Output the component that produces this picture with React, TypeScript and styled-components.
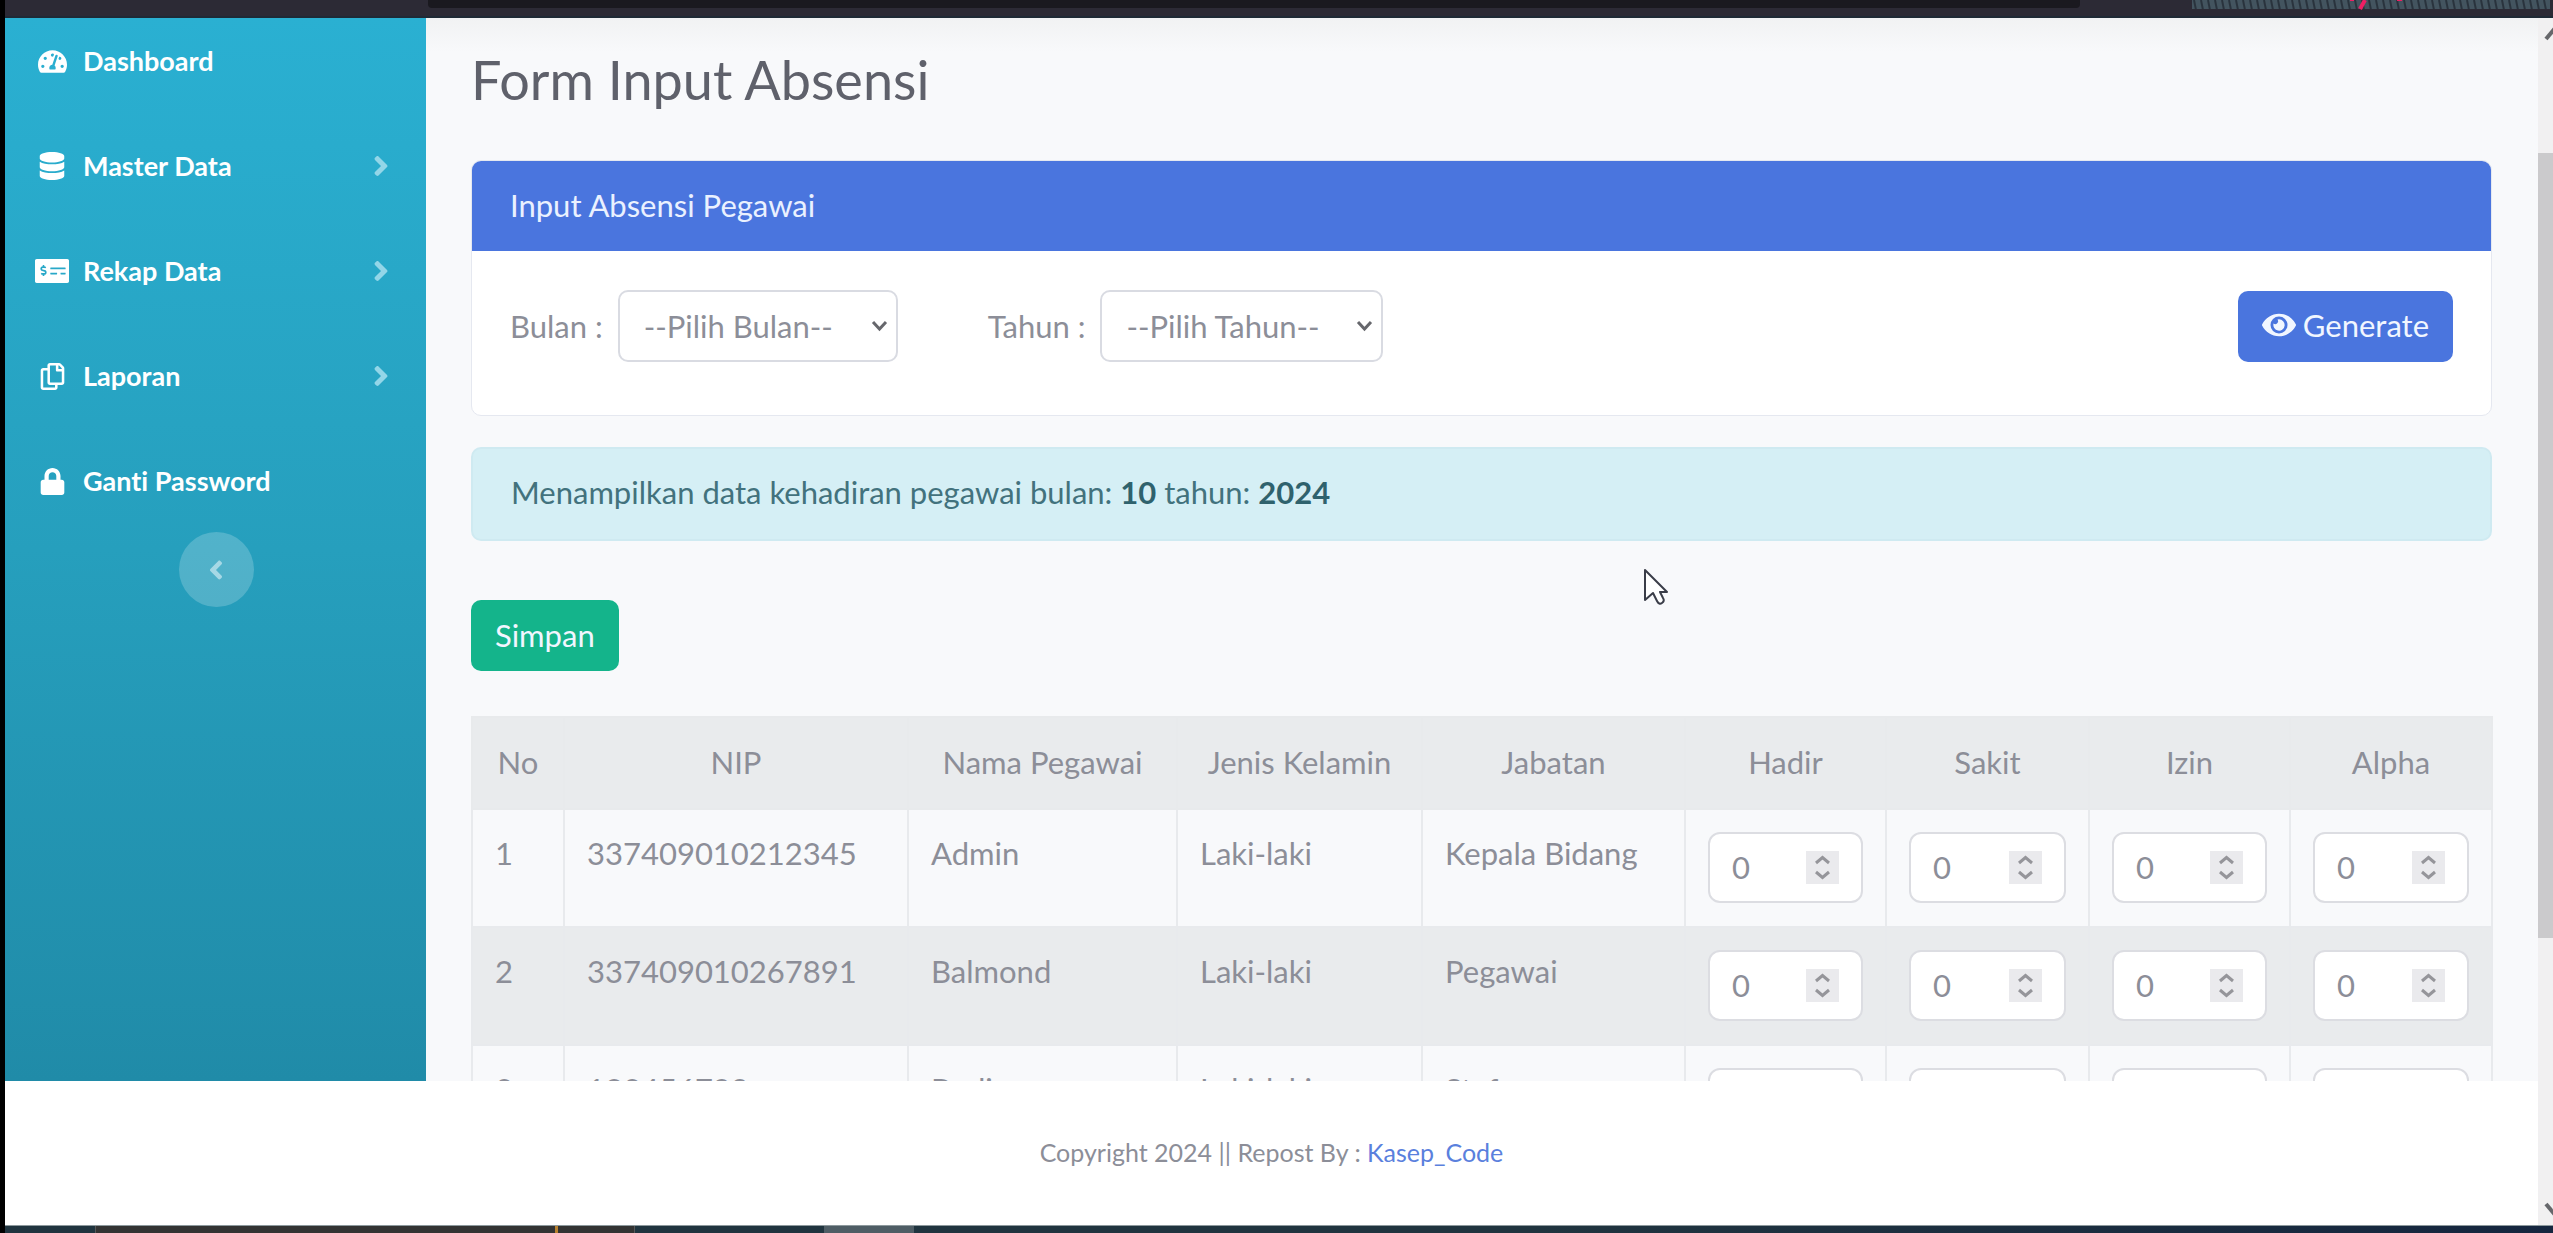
import React from "react";
import styled, { createGlobalStyle } from "styled-components";
import {
  FaTachometerAlt,
  FaDatabase,
  FaMoneyCheckAlt,
  FaRegCopy,
  FaLock,
  FaAngleRight,
  FaAngleLeft,
  FaEye,
} from "react-icons/fa";

const GlobalStyle = createGlobalStyle`
  *, *::before, *::after { box-sizing: border-box; }
  html, body, #root { height: 100%; }
  body {
    margin: 0;
    overflow: hidden;
    background: #fff;
    color: #8c8e98;
    font-family: Lato, "Open Sans", sans-serif;
    font-size: 31px;
    line-height: 46px;
    font-variant-ligatures: none;
  }
  button, input, select { font: inherit; color: inherit; }
  a { text-decoration: none; }
`;

const Screen = styled.div`
  display: flex;
  flex-direction: column;
  height: 100vh;
  border-left: 5px solid #000;
`;

const BrowserBar = styled.div`
  display: flex;
  justify-content: space-between;
  flex: none;
  height: 18px;
  padding-left: 423px;
  background: #2c2a35;
  border-bottom: 2px solid #1f2a36;
`;

const AddressBar = styled.div`
  flex: 0 1 1652px;
  height: 8px;
  border-radius: 0 0 4px 4px;
  background: #1a191f;
`;

const Stripes = styled.svg`
  display: block;
  width: 361px;
  height: 10px;
`;

const Viewport = styled.div`
  display: flex;
  flex: 1;
  min-height: 0;
`;

const Page = styled.div`
  display: flex;
  flex-direction: column;
  flex: 1;
  min-width: 0;
`;

const Body = styled.div`
  display: flex;
  flex: 1;
  min-height: 0;
`;

const Sidebar = styled.nav`
  display: flex;
  flex-direction: column;
  flex: none;
  width: 421px;
  padding: 0 29px 0 30px;
  background: linear-gradient(180deg, #2ab0d2 0%, #269fbd 50%, #208ba8 100%);
`;

const Menu = styled.div`
  display: flex;
  flex-direction: column;
  gap: 19px;
`;

const NavLink = styled.a`
  display: flex;
  align-items: center;
  gap: 14px;
  height: 86px;
  color: #fff;
  font-size: 27px;
  font-weight: 700;
`;

const NavIcon = styled.span`
  display: flex;
  justify-content: center;
  width: 34px;
`;

const NavText = styled.span`
  flex: 1;
`;

const Caret = styled.span`
  display: flex;
  color: #93d6e8;
  font-size: 32px;
`;

const Toggle = styled.button`
  display: flex;
  align-items: center;
  justify-content: center;
  width: 75px;
  height: 75px;
  margin: 8px auto 0;
  padding: 0;
  border: 0;
  border-radius: 50%;
  background: rgba(255, 255, 255, 0.2);
  color: #a6d8e5;
  font-size: 30px;
`;

const Main = styled.main`
  flex: 1;
  min-width: 0;
  overflow: hidden;
  padding: 30px 46px 0 45px;
  background: linear-gradient(180deg, #f1f2f3 0, #f8f9fb 34px);
`;

const Title = styled.h1`
  margin: 0 0 48px;
  color: #5f616b;
  font-size: 54px;
  font-weight: 400;
  line-height: 64px;
`;

const Card = styled.section`
  margin-bottom: 31px;
  border: 1px solid #e5e8f0;
  border-radius: 10px;
  background: #fff;
  overflow: hidden;
`;

const CardHeader = styled.h2`
  margin: 0;
  padding: 21px 38px 23px;
  background: #4a75de;
  color: #eaf1ff;
  font-size: 31px;
  font-weight: 400;
  line-height: 46px;
`;

const FilterForm = styled.form`
  display: flex;
  align-items: center;
  padding: 39px 38px 53px;
`;

const Field = styled.div`
  display: flex;
  align-items: center;
  gap: 15px;
  margin-right: 90px;
`;

const SelectBox = styled.div`
  display: grid;
  align-items: center;
`;

const Select = styled.select<{ $width: number }>`
  grid-area: 1 / 1;
  width: ${(p) => p.$width}px;
  height: 72px;
  padding: 0 24px;
  border: 2px solid #d9dbe2;
  border-radius: 10px;
  background: #fff;
  appearance: none;
  outline: 0;
`;

const SelectArrow = styled.svg`
  grid-area: 1 / 1;
  justify-self: end;
  width: 17px;
  height: 12px;
  margin-right: 10px;
  pointer-events: none;
  fill: none;
  stroke: #66676c;
  stroke-width: 3;
`;

const Toolbar = styled.div`
  display: flex;
`;

const Button = styled.button<{ $tone: string; $push?: boolean }>`
  display: flex;
  align-items: center;
  gap: 7px;
  height: 71px;
  margin-left: ${(p) => (p.$push ? "auto" : "0")};
  padding: 0 24px 2px;
  border: 0;
  border-radius: 10px;
  background: ${(p) => p.$tone};
  color: #f1f6ff;
`;

const Alert = styled.div`
  margin-bottom: 59px;
  padding: 20px 38px 24px;
  border: 2px solid #cfeaf1;
  border-radius: 10px;
  background: #d5eff5;
  color: #42727d;
  strong { color: #2f626d; font-weight: 700; }
`;

const Table = styled.table`
  width: 100%;
  margin-top: 45px;
  border-collapse: collapse;
  table-layout: fixed;
`;

const HeadCell = styled.th`
  height: 92px;
  padding: 0 0 2px;
  border: 2px solid #e8eaec;
  background: #e9ebed;
  font-weight: 400;
  text-align: center;
`;

const Row = styled.tr`
  &:nth-child(even) { background: #e9ebed; }
`;

const Cell = styled.td`
  height: 118px;
  padding: 22px;
  border: 2px solid #e8eaed;
  line-height: 42px;
  vertical-align: top;
  white-space: nowrap;
`;

const NumberBox = styled.div`
  display: flex;
  align-items: center;
  height: 71px;
  padding: 0 22px;
  border: 2px solid #dcdde2;
  border-radius: 12px;
  background: #fff;
`;

const NumberInput = styled.input`
  flex: 1;
  min-width: 0;
  height: 46px;
  padding: 0 0 2px;
  border: 0;
  outline: 0;
  background: none;
  appearance: textfield;
  &::-webkit-inner-spin-button { appearance: none; margin: 0; }
`;

const Spinner = styled.svg`
  flex: none;
  width: 33px;
  height: 33px;
  background: #eaeaed;
  fill: none;
  stroke: #95959a;
  stroke-width: 3;
`;

const Footer = styled.footer`
  display: flex;
  align-items: center;
  justify-content: center;
  flex: none;
  height: 144px;
  padding-bottom: 2px;
  background: #fff;
  font-size: 25px;
  white-space: pre;
  a { color: #5a80dd; }
`;

const ScrollTrack = styled.div`
  display: flex;
  flex-direction: column;
  flex: none;
  width: 15px;
  background: #f1f0f1;
`;

const ScrollArrow = styled.svg`
  width: 15px;
  height: 30px;
  fill: none;
  stroke: #66676b;
  stroke-width: 4;
`;

const ThumbLane = styled.div`
  display: flex;
  flex-direction: column;
  flex: 1;
  padding: 105px 0 257px;
`;

const ScrollThumb = styled.div`
  flex: 1;
  background: #cbcacc;
`;

const Taskbar = styled.div`
  display: flex;
  flex: none;
  height: 8px;
  padding-left: 90px;
  border-top: 1px solid #8d999d;
  background: linear-gradient(90deg, #20343f 0, #20343f 60%, #15263f 100%);
`;

const TaskPreview = styled.div`
  display: flex;
  width: 540px;
  padding-left: 459px;
  border: 1px solid #575757;
  border-width: 0 1px;
  background: #333;
`;

const TaskMark = styled.div`
  width: 3px;
  background: #b8812f;
`;

const TaskActive = styled.div`
  width: 90px;
  margin-left: 189px;
  background: #4f5d65;
`;

const Cursor = styled.svg`
  position: absolute;
  top: 568px;
  left: 1643px;
  width: 26px;
  height: 38px;
`;

const menu = [
  { label: "Dashboard", icon: <FaTachometerAlt size={29} />, nested: false },
  { label: "Master Data", icon: <FaDatabase size={28} />, nested: true },
  { label: "Rekap Data", icon: <FaMoneyCheckAlt size={34} />, nested: true },
  { label: "Laporan", icon: <FaRegCopy size={27} />, nested: true },
  { label: "Ganti Password", icon: <FaLock size={27} />, nested: false },
];

const columns = [
  { name: "No", width: 92 },
  { name: "NIP", width: 344 },
  { name: "Nama Pegawai", width: 269 },
  { name: "Jenis Kelamin", width: 245 },
  { name: "Jabatan", width: 263 },
  { name: "Hadir", width: 201 },
  { name: "Sakit", width: 203 },
  { name: "Izin", width: 201 },
  { name: "Alpha", width: 202 },
];

const counts = ["Hadir", "Sakit", "Izin", "Alpha"];

const employees = [
  { nip: "337409010212345", name: "Admin", sex: "Laki-laki", job: "Kepala Bidang" },
  { nip: "337409010267891", name: "Balmond", sex: "Laki-laki", job: "Pegawai" },
  { nip: "123456789", name: "Budi", sex: "Laki-laki", job: "Staf" },
];

function Dropdown({ id, label, text, width }: { id: string; label: string; text: string; width: number }) {
  return (
    <Field>
      <label htmlFor={id}>{label}</label>
      <SelectBox>
        <Select id={id} $width={width}>
          <option>{text}</option>
        </Select>
        <SelectArrow viewBox="0 0 17 12">
          <path d="M2 2l6.500 7 6.500-7" />
        </SelectArrow>
      </SelectBox>
    </Field>
  );
}

function CountField({ label }: { label: string }) {
  return (
    <NumberBox>
      <NumberInput type="number" defaultValue={0} aria-label={label} />
      <Spinner viewBox="0 0 33 33">
        <path d="M10 12l6.500-5.500 6.500 5.500M10 21l6.500 5.500 6.500-5.500" />
      </Spinner>
    </NumberBox>
  );
}

export default function App() {
  return (
    <>
      <GlobalStyle />
      <Screen>
        <BrowserBar>
          <AddressBar />
          <Stripes viewBox="0 0 361 10">
            <defs>
              <pattern id="hatch" width="7" height="10" patternUnits="userSpaceOnUse">
                <rect width="7" height="10" fill="#43545f" />
                <path d="M2 0l2 10" stroke="#29333d" strokeWidth="2" />
              </pattern>
            </defs>
            <rect width="358" height="9" fill="url(#hatch)" />
            <path d="M173 0l-5 9" stroke="#ee1f63" strokeWidth="4" />
            <path d="M158 0h4M205 0h5" stroke="#ee1f63" strokeWidth="2" />
          </Stripes>
        </BrowserBar>
        <Viewport>
          <Page>
            <Body>
              <Sidebar>
                <Menu>
                  {menu.map((item) => (
                    <NavLink href="#" key={item.label}>
                      <NavIcon>{item.icon}</NavIcon>
                      <NavText>{item.label}</NavText>
                      {item.nested && (
                        <Caret>
                          <FaAngleRight />
                        </Caret>
                      )}
                    </NavLink>
                  ))}
                </Menu>
                <Toggle aria-label="Toggle sidebar">
                  <FaAngleLeft />
                </Toggle>
              </Sidebar>
              <Main>
                <Title>Form Input Absensi</Title>
                <Card>
                  <CardHeader>Input Absensi Pegawai</CardHeader>
                  <FilterForm>
                    <Dropdown id="bulan" label="Bulan :" text="--Pilih Bulan--" width={280} />
                    <Dropdown id="tahun" label="Tahun :" text="--Pilih Tahun--" width={283} />
                    <Button type="button" $tone="#4a75de" $push>
                      <FaEye size={34} />
                      Generate
                    </Button>
                  </FilterForm>
                </Card>
                <Alert>
                  Menampilkan data kehadiran pegawai bulan: <strong>10</strong> tahun: <strong>2024</strong>
                </Alert>
                <Toolbar>
                  <Button type="button" $tone="#14b48b">
                    Simpan
                  </Button>
                </Toolbar>
                <Table>
                  <colgroup>
                    {columns.map((c) => (
                      <col key={c.name} width={c.width} />
                    ))}
                  </colgroup>
                  <thead>
                    <tr>
                      {columns.map((c) => (
                        <HeadCell key={c.name}>{c.name}</HeadCell>
                      ))}
                    </tr>
                  </thead>
                  <tbody>
                    {employees.map((e, i) => (
                      <Row key={e.nip}>
                        <Cell>{i + 1}</Cell>
                        <Cell>{e.nip}</Cell>
                        <Cell>{e.name}</Cell>
                        <Cell>{e.sex}</Cell>
                        <Cell>{e.job}</Cell>
                        {counts.map((c) => (
                          <Cell key={c}>
                            <CountField label={`${c} ${e.name}`} />
                          </Cell>
                        ))}
                      </Row>
                    ))}
                  </tbody>
                </Table>
              </Main>
            </Body>
            <Footer>
              Copyright 2024 || Repost By : <a href="#">Kasep_Code</a>
            </Footer>
          </Page>
          <ScrollTrack>
            <ScrollArrow viewBox="0 0 15 30">
              <path d="M8 21l10-12" />
            </ScrollArrow>
            <ThumbLane>
              <ScrollThumb />
            </ThumbLane>
            <ScrollArrow viewBox="0 0 15 30">
              <path d="M8 9l10 12" />
            </ScrollArrow>
          </ScrollTrack>
        </Viewport>
        <Taskbar>
          <TaskPreview>
            <TaskMark />
          </TaskPreview>
          <TaskActive />
        </Taskbar>
      </Screen>
      <Cursor viewBox="0 0 26 38">
        <path
          d="M2 2v30l8-7 4 8q2 4 5 2t1-5l-3-6h7z"
          fill="#fff"
          stroke="#3a3d48"
          strokeWidth="2"
          strokeLinejoin="round"
        />
      </Cursor>
    </>
  );
}
